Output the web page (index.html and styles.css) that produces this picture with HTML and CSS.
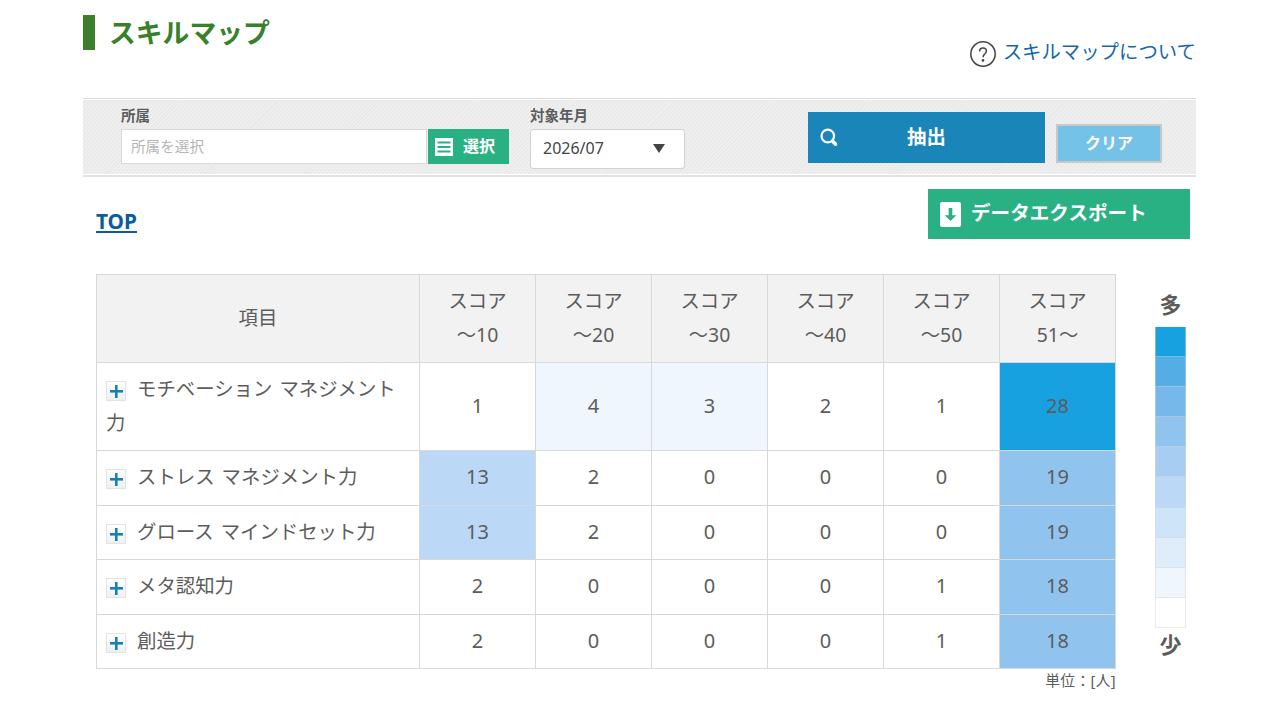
FILE: index.html
```html
<!DOCTYPE html>
<html lang="ja">
<head>
    <meta charset="UTF-8">
    <meta name="viewport" content="width=device-width, initial-scale=1.0">
    <title>スキルマップ</title>
    <link rel="stylesheet" href="styles.css">
</head>
<body>
    <div class="container">
        <!-- Page title -->
        <div class="page-header">
            <h1>スキルマップ</h1>
            <a class="help-link" href="#">
                <svg class="help-icon" viewBox="0 0 28 28">
                    <circle cx="14" cy="14" r="12.2" fill="none" stroke="#444" stroke-width="1.5"/>
                    <path d="M10.6 11.4c0-2.2 1.4-3.5 3.4-3.5s3.4 1.2 3.4 3.1c0 1.5-.8 2.2-1.8 3.1-1.1.9-1.6 1.5-1.6 3.1" fill="none" stroke="#444" stroke-width="1.5"/>
                    <circle cx="14" cy="20.4" r="1.3" fill="#444"/>
                </svg>
                <span>スキルマップについて</span>
            </a>
        </div>

        <!-- Search conditions -->
        <div class="search-box">
            <div class="field dept">
                <label for="dept">所属</label>
                <div class="dept-row">
                    <input type="text" id="dept" placeholder="所属を選択">
                    <button class="btn btn-select">
                        <svg width="18" height="18" viewBox="0 0 18 18">
                            <path d="M0 0h18v18H0z" fill="#fff"/>
                            <path d="M2.5 4.5h13M2.5 9h13M2.5 13.5h13" stroke="#2ab183" stroke-width="2"/>
                        </svg>
                        <span>選択</span>
                    </button>
                </div>
            </div>
            <div class="field">
                <label>対象年月</label>
                <div class="month-select">
                    <span>2026/07</span>
                    <svg width="12" height="9" viewBox="0 0 12 9"><path d="M0 0h12L6 9z" fill="#444"/></svg>
                </div>
            </div>
            <button class="btn btn-search">
                <svg width="19" height="20" viewBox="0 0 19 20">
                    <circle cx="7.8" cy="8" r="6.3" fill="none" stroke="#fff" stroke-width="2.2"/>
                    <path d="M12.5 13l3 3.2" stroke="#fff" stroke-width="3.6" stroke-linecap="round"/>
                </svg>
                <span>抽出</span>
            </button>
            <button class="btn btn-clear">クリア</button>
        </div>

        <div class="toolbar">
            <a class="top-link" href="#">TOP</a>
            <button class="btn btn-export">
                <svg width="21" height="25" viewBox="0 0 21 25">
                    <rect width="21" height="25" rx="2" fill="#fff"/>
                    <path d="M8.7 6h3.6v7.3h4L10.5 19l-5.8-5.7h4z" fill="#2ab183"/>
                </svg>
                <span>データエクスポート</span>
            </button>
        </div>

        <!-- Skill map -->
        <div class="map">
            <div class="map-main">
                <table class="map-table">
                    <thead>
                        <tr>
                            <th class="item">項目</th>
                            <th>スコア<br>～10</th>
                            <th>スコア<br>～20</th>
                            <th>スコア<br>～30</th>
                            <th>スコア<br>～40</th>
                            <th>スコア<br>～50</th>
                            <th>スコア<br>51～</th>
                        </tr>
                    </thead>
                    <tbody>
                        <tr class="tall">
                            <td class="name"><i class="plus"></i>モチベーション マネジメント力</td>
                            <td>1</td><td class="lv1">4</td><td class="lv1">3</td><td>2</td><td>1</td><td class="lv9">28</td>
                        </tr>
                        <tr>
                            <td class="name"><i class="plus"></i>ストレス マネジメント力</td>
                            <td class="lv4">13</td><td>2</td><td>0</td><td>0</td><td>0</td><td class="lv6">19</td>
                        </tr>
                        <tr>
                            <td class="name"><i class="plus"></i>グロース マインドセット力</td>
                            <td class="lv4">13</td><td>2</td><td>0</td><td>0</td><td>0</td><td class="lv6">19</td>
                        </tr>
                        <tr>
                            <td class="name"><i class="plus"></i>メタ認知力</td>
                            <td>2</td><td>0</td><td>0</td><td>0</td><td>1</td><td class="lv6">18</td>
                        </tr>
                        <tr>
                            <td class="name"><i class="plus"></i>創造力</td>
                            <td>2</td><td>0</td><td>0</td><td>0</td><td>1</td><td class="lv6">18</td>
                        </tr>
                    </tbody>
                </table>
                <p class="unit">単位：[人]</p>
            </div>

            <!-- Color legend -->
            <div class="legend">
                <span class="legend-label">多</span>
                <ul>
                    <li class="lv9"></li>
                    <li class="lv8"></li>
                    <li class="lv7"></li>
                    <li class="lv6"></li>
                    <li class="lv5"></li>
                    <li class="lv4"></li>
                    <li class="lv3"></li>
                    <li class="lv2"></li>
                    <li class="lv1"></li>
                    <li></li>
                </ul>
                <span class="legend-label">少</span>
            </div>
        </div>
    </div>
</body>
</html>
```

FILE: styles.css
```css
* {
    box-sizing: border-box;
}

body {
    margin: 0;
    background-color: #fff;
    color: #5c5c5c;
    font-family: "Noto Sans", "Noto Sans CJK JP", sans-serif;
    font-size: 19.4px;
}

.container {
    width: 1113px;
    margin-left: 83px;
    padding-top: 15px;
}

/* header */
.page-header {
    display: flex;
    justify-content: space-between;
    height: 83px;
}

h1 {
    height: 35px;
    margin: 0;
    padding-left: 14px;
    border-left: 12px solid #3e7d2d;
    color: #38802a;
    font-size: 26.8px;
    line-height: 36px;
}

.help-link {
    display: flex;
    height: 28px;
    margin-top: 25px;
    color: #1367ac;
    line-height: 23px;
    text-decoration: none;
}

.help-icon {
    width: 28px;
    height: 28px;
    margin-right: 6px;
}

/* search box */
.search-box {
    display: flex;
    align-items: flex-start;
    height: 79px;
    padding: 6px 34px 0 38px;
    border-top: 1px solid #dcdcdc;
    border-bottom: 2px solid #e2e2e2;
    background: repeating-linear-gradient(135deg, #e9e9e9 0, #e9e9e9 1.4px, #f0f0f0 1.4px, #f0f0f0 2.8px);
    box-shadow: inset 0 1px 0 #fff, inset 0 -1px 0 #fff;
}

.field label {
    display: block;
    height: 24px;
    font-size: 14.5px;
    font-weight: bold;
    line-height: 20px;
}

.dept {
    width: 409px;
}

.dept-row {
    display: flex;
}

.dept input {
    width: 306px;
    height: 35px;
    margin-right: 1px;
    padding: 0 9px 1px;
    border: 1px solid #dadada;
    font-family: inherit;
    font-size: 14.6px;
}

.dept input::placeholder {
    color: #b5b5b5;
}

.month-select {
    display: flex;
    align-items: center;
    justify-content: space-between;
    width: 155px;
    height: 40px;
    padding: 0 19px 2px 12px;
    border: 1px solid #d2d2d2;
    border-radius: 3px;
    background-color: #fff;
    color: #444;
    font-size: 16px;
}

.btn {
    display: flex;
    align-items: center;
    padding: 0;
    border: none;
    color: #fff;
    font-family: inherit;
    font-weight: bold;
    cursor: pointer;
}

.btn span {
    padding-bottom: 4px;
}

.btn-select {
    width: 81px;
    height: 35px;
    padding-left: 7px;
    gap: 10px;
    background-color: #2ab183;
    font-size: 16px;
}

.btn-search {
    width: 237px;
    height: 51px;
    margin: 7px 0 0 123px;
    padding-left: 12px;
    gap: 68px;
    background-color: #1985b8;
    font-size: 19.4px;
}

.btn-clear {
    justify-content: center;
    width: 106px;
    height: 39px;
    margin: 19px 0 0 11px;
    padding-bottom: 3px;
    border: 2px solid #c8c8c8;
    background-color: #75c2e8;
    font-size: 16px;
}

/* toolbar */
.toolbar {
    display: flex;
    justify-content: space-between;
    height: 97px;
    padding: 12px 6px 0 13px;
}

.top-link {
    height: 30px;
    margin-top: 17px;
    color: #0a5ca0;
    font-size: 20.8px;
    font-weight: bold;
    line-height: 30px;
}

.btn-export {
    width: 262px;
    height: 50px;
    padding-left: 12px;
    gap: 10px;
    background-color: #2ab183;
    font-size: 19.6px;
}

.btn-export span {
    padding-bottom: 6px;
}

/* table */
.map {
    display: flex;
    padding-left: 13px;
}

.map-main {
    width: 1020px;
}

.map-table {
    width: 1020px;
    border-collapse: collapse;
    table-layout: fixed;
}

.map-table th,
.map-table td {
    height: 54px;
    padding: 0 0 2px;
    border: 1px solid #d8d8d8;
    font-weight: normal;
    line-height: 34px;
    text-align: center;
}

.map-table td {
    font-size: 20px;
}

.map-table tr:nth-child(even) td {
    height: 55px;
}

.map-table th {
    height: 88px;
    background-color: #f2f2f2;
}

.map-table .tall td {
    height: 88px;
}

.map-table .item {
    width: 323px;
}

.map-table .name {
    padding: 0 10px 2px 9px;
    font-size: 19.4px;
    text-align: left;
    word-spacing: 2px;
}

.plus {
    display: inline-block;
    width: 20px;
    height: 20px;
    margin-right: 11px;
    border: 1px solid #e3e3e3;
    background:
        linear-gradient(#1580b8, #1580b8) 3px 8px / 13px 2.6px no-repeat,
        linear-gradient(#1580b8, #1580b8) 8px 3px / 2.6px 13px no-repeat,
        linear-gradient(#fff, #f0f0f0);
    vertical-align: -5px;
}

.unit {
    margin: 1px 0 0;
    font-size: 14.8px;
    letter-spacing: 0.3px;
    line-height: 21px;
    text-align: right;
}

/* legend */
.legend {
    width: 31px;
    margin-left: 39px;
    padding-top: 14px;
    text-align: center;
}

.legend-label {
    display: block;
    height: 32px;
    font-size: 22px;
    font-weight: bold;
    line-height: 32px;
}

.legend ul {
    margin: 7px 0 0;
    padding: 0;
    list-style: none;
}

.legend li {
    height: 30.1px;
    border: 1px solid rgba(215, 215, 215, 0.5);
    border-top: none;
}

/* color levels */
.lv1 { background-color: #eff6fe; }
.lv2 { background-color: #dfedfb; }
.lv3 { background-color: #cee4f9; }
.lv4 { background-color: #bbd9f6; }
.lv5 { background-color: #a7cef2; }
.lv6 { background-color: #91c3ef; }
.lv7 { background-color: #77b8eb; }
.lv8 { background-color: #55ade6; }
.lv9 { background-color: #18a1e1; }
```
